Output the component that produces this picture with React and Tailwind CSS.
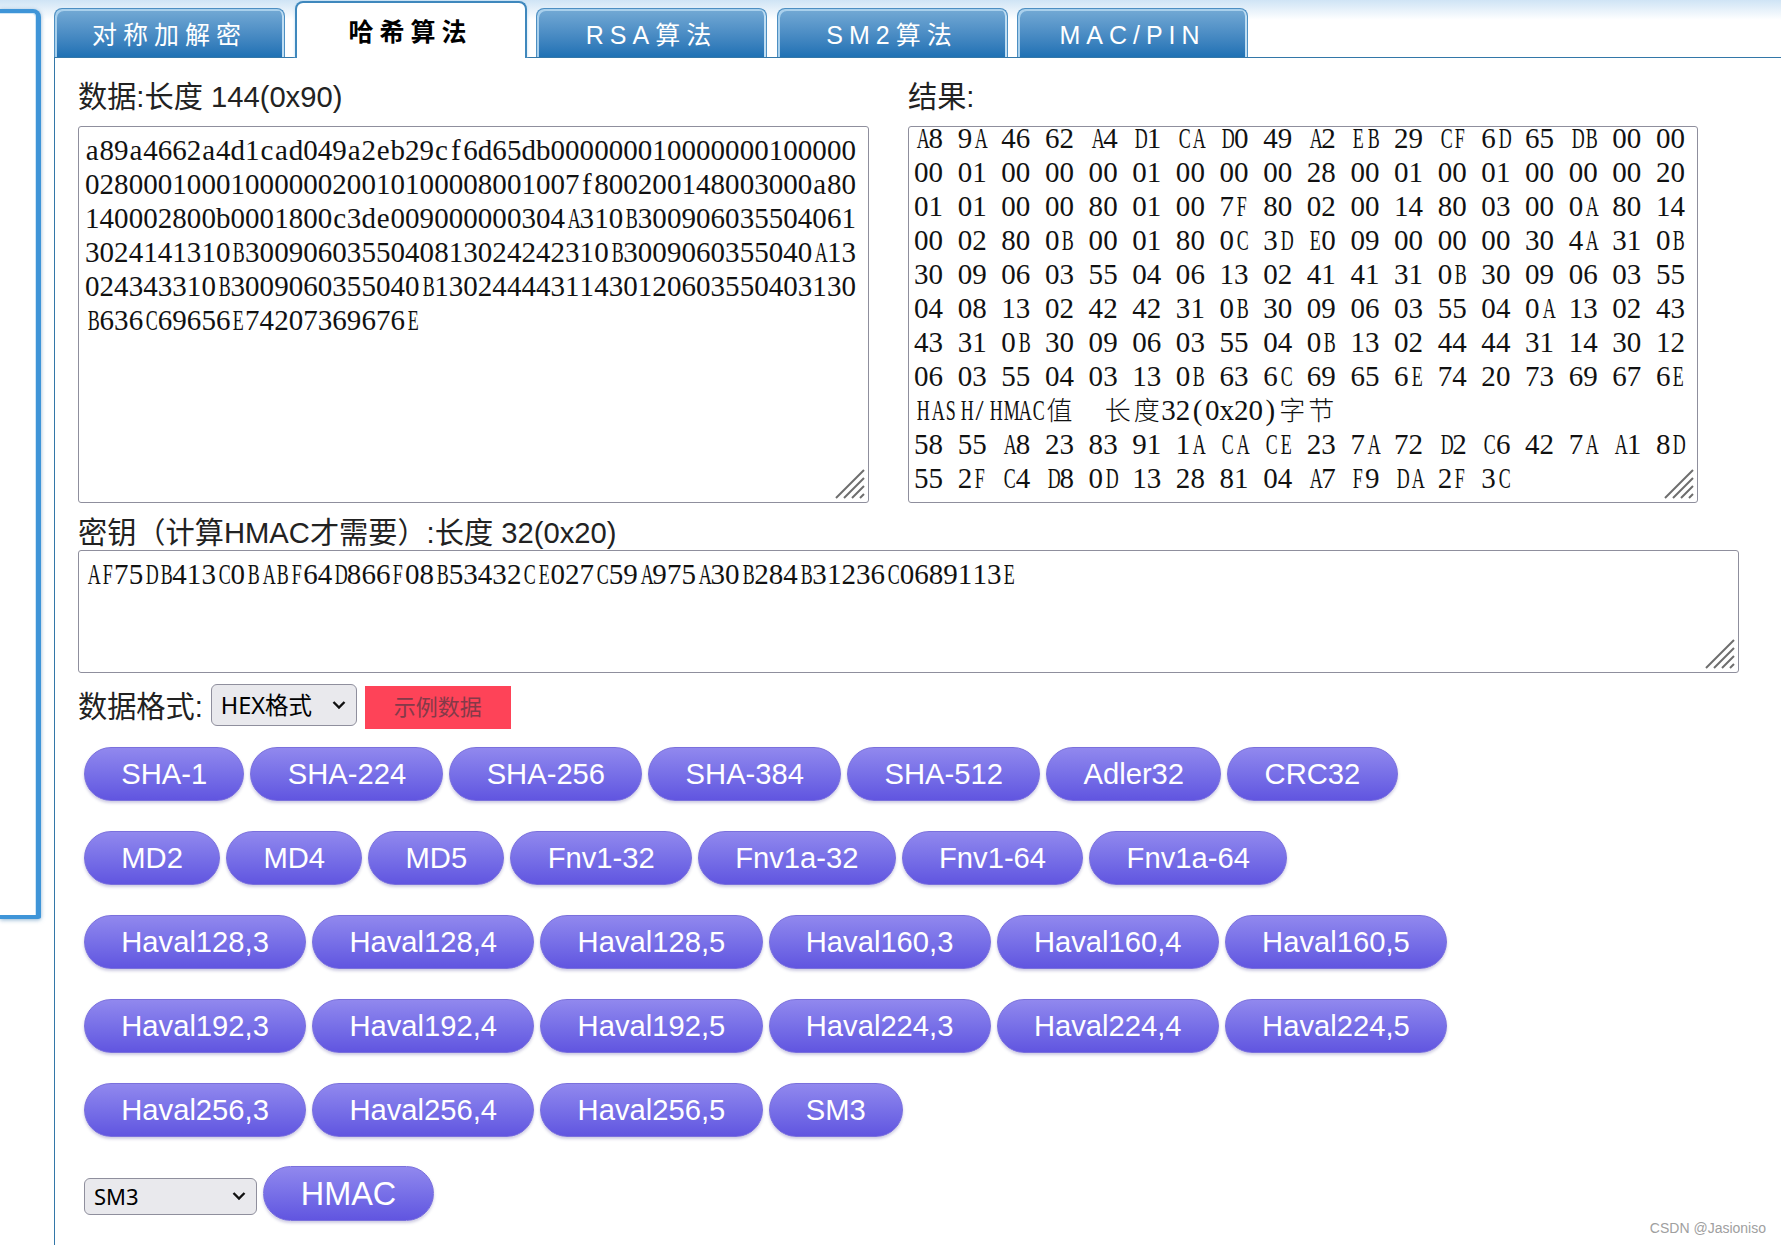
import React from "react";

const sansFont = { fontFamily: '"Liberation Sans", "Noto Sans CJK SC", sans-serif' };

const dataLines = [
  "a89a4662a4d1cad049a2eb29cf6d65db000000010000000100000",
  "0280001000100000020010100008001007f800200148003000a80",
  "140002800b0001800c3de009000000304A310B300906035504061",
  "3024141310B3009060355040813024242310B3009060355040A13",
  "024343310B3009060355040B13024444311430120603550403130",
  "B636C69656E74207369676E",
];

const resultLines = [
  "A8 9A 46 62 A4 D1 CA D0 49 A2 EB 29 CF 6D 65 DB 00 00",
  "00 01 00 00 00 01 00 00 00 28 00 01 00 01 00 00 00 20",
  "01 01 00 00 80 01 00 7F 80 02 00 14 80 03 00 0A 80 14",
  "00 02 80 0B 00 01 80 0C 3D E0 09 00 00 00 30 4A 31 0B",
  "30 09 06 03 55 04 06 13 02 41 41 31 0B 30 09 06 03 55",
  "04 08 13 02 42 42 31 0B 30 09 06 03 55 04 0A 13 02 43",
  "43 31 0B 30 09 06 03 55 04 0B 13 02 44 44 31 14 30 12",
  "06 03 55 04 03 13 0B 63 6C 69 65 6E 74 20 73 69 67 6E",
  "HASH/HMAC值  长度32(0x20)字节",
  "58 55 A8 23 83 91 1A CA CE 23 7A 72 D2 C6 42 7A A1 8D",
  "55 2F C4 D8 0D 13 28 81 04 A7 F9 DA 2F 3C",
];

const keyLine = "AF75DB413C0BABF64D866F08B53432CE027C59A975A30B284B31236C0689113E";

const tabs = ["对称加解密", "哈希算法", "RSA算法", "SM2算法", "MAC/PIN"];

const buttonRows = [
  ["SHA-1", "SHA-224", "SHA-256", "SHA-384", "SHA-512", "Adler32", "CRC32"],
  ["MD2", "MD4", "MD5", "Fnv1-32", "Fnv1a-32", "Fnv1-64", "Fnv1a-64"],
  ["Haval128,3", "Haval128,4", "Haval128,5", "Haval160,3", "Haval160,4", "Haval160,5"],
  ["Haval192,3", "Haval192,4", "Haval192,5", "Haval224,3", "Haval224,4", "Haval224,5"],
  ["Haval256,3", "Haval256,4", "Haval256,5", "SM3"],
];

// fixed cell per character, the box text in the screenshot is a narrow monospace serif
const MonoLine = ({ text }) => (
  <div className="h-[34px] leading-[34px] whitespace-pre">
    {text.split("").map((c, i) => {
      if (c.charCodeAt(0) > 255) {
        return (
          <span key={i} className="inline-block w-[29.1px] text-center text-[26px] font-light">
            {c}
          </span>
        );
      }
      return (
        <span
          key={i}
          className={
            /[A-Z]/.test(c)
              ? "inline-block w-[14.56px] text-center scale-x-[0.62]"
              : "inline-block w-[14.56px] text-center"
          }
        >
          {c}
        </span>
      );
    })}
  </div>
);

const ResizeGrip = () => (
  <svg className="absolute right-[3px] bottom-[3px]" width="30" height="30" viewBox="0 0 30 30">
    <path
      d="M1 29 L29 1 M9 29 L29 9 M17 29 L29 17 M25 29 L29 25"
      stroke="#6e6e6e"
      strokeWidth="2"
      fill="none"
    />
  </svg>
);

const TextBox = ({ lines, className, scrolled }) => (
  <div
    className={`relative overflow-hidden rounded-[3px] border border-[#8f8f9d] bg-white px-[6px] text-[29px] text-[#111] ${className}`}
    style={{ fontFamily: '"Liberation Serif", "Noto Sans CJK SC", serif' }}
  >
    <div className={scrolled ? "-mt-[6px] -ml-px" : "mt-[6px]"}>
      {lines.map((line, i) => (
        <MonoLine key={i} text={line} />
      ))}
    </div>
    <ResizeGrip />
  </div>
);

const Chevron = () => (
  <svg
    className="pointer-events-none absolute right-[11px] top-1/2 -translate-y-1/2"
    width="14"
    height="9"
    viewBox="0 0 14 9"
  >
    <path d="M1.5 1.5 L7 7 L12.5 1.5" stroke="#111" strokeWidth="2.4" fill="none" />
  </svg>
);

const HashButton = ({ label, big }) => (
  <button
    className={
      big
        ? "h-[55px] w-[171px] shrink-0 rounded-[28px] border border-[#7a70dc] bg-gradient-to-b from-[#9188ee] to-[#6155e0] pt-[3px] text-[32.4px] text-white shadow-[0_2px_3px_rgba(60,50,140,0.25)]"
        : "h-[54px] shrink-0 rounded-[27px] border border-[#7a70dc] bg-gradient-to-b from-[#9188ee] to-[#6155e0] px-[36.25px] pt-[3px] text-[29.2px] text-white shadow-[0_2px_3px_rgba(60,50,140,0.25)]"
    }
  >
    {label}
  </button>
);

const Tab = ({ label, active }) =>
  active ? (
    <div className="-mb-px flex h-[57px] w-[232px] items-start justify-center rounded-t-[8px] border-x-2 border-t-2 border-[#3f88bd] bg-white pt-[14px] text-[25px] leading-[30px] font-bold tracking-[6px] text-black shadow-[0_0_3px_#bcdcf2]">
      {label}
    </div>
  ) : (
    <div className="flex h-[49px] w-[231px] items-center justify-center rounded-t-[8px] border-x border-t border-[#4d8fc2] bg-gradient-to-b from-[#74aad5] to-[#1e71b4] pt-[5px] text-[25px] tracking-[6px] text-white shadow-[inset_2px_2px_0_#a9d0ec,inset_-2px_0_0_#c0def3]">
      {label}
    </div>
  );

export default function App() {
  return (
    <div
      className="relative flex h-[1245px] overflow-hidden bg-[linear-gradient(#cfe4f5,#ffffff_20px)] text-[#222]"
      style={sansFont}
    >
      {/* left panel, only its edge is in the shot */}
      <div className="mt-[9px] h-[910px] w-[41px] shrink-0 rounded-tr-[8px] rounded-br-[3px] border-y-[4px] border-r-[5px] border-[#3f95d8] bg-white shadow-[0_1px_4px_rgba(70,130,180,0.6),inset_-1px_1px_0_#cfe6f7]" />

      <div className="ml-[13px] flex min-w-0 flex-1 flex-col">
        <div className="flex h-[58px] shrink-0 items-end gap-[9.5px] border-b border-[#3377a8]">
          {tabs.map((t, i) => (
            <Tab key={t} label={t} active={i === 1} />
          ))}
        </div>

        <div className="flex-1 border-l border-[#3377a8] bg-white pt-[22px] pl-[23px]">
          <div className="flex gap-[39px]">
            <div className="w-[791px]">
              <div className="mb-[12px] text-[29.2px] leading-[34px]">数据:长度 144(0x90)</div>
              <TextBox lines={dataLines} className="h-[377px]" />
            </div>
            <div className="w-[790px]">
              <div className="mb-[12px] text-[29.2px] leading-[34px]">结果:</div>
              <TextBox lines={resultLines} className="h-[377px]" scrolled />
            </div>
          </div>

          <div className="mt-[13px] text-[29.2px] leading-[34px]">密钥（计算HMAC才需要）:长度 32(0x20)</div>
          <TextBox lines={[keyLine]} className="h-[123px] w-[1661px]" />

          <div className="mt-[11px] flex items-start gap-[8px]">
            <span className="mt-[6px] text-[29.2px] leading-[34px]">数据格式:</span>
            <div className="relative">
              <select
                className="h-[42px] w-[146px] appearance-none rounded-[6px] border border-[#8f8f9d] bg-[#e9e9ed] pt-[2px] pl-[9px] text-[23.5px] text-black"
                style={{ fontFamily: '"Noto Sans", "Noto Sans CJK SC", sans-serif' }}
              >
                <option>HEX格式</option>
              </select>
              <Chevron />
            </div>
            <button className="mt-[2px] h-[43px] w-[146px] bg-[#fe4358] text-[22px] text-[#843a49]">示例数据</button>
          </div>

          <div className="mt-[17.5px] ml-[6px] flex flex-col gap-[30px]">
            {buttonRows.map((row, i) => (
              <div key={i} className="flex gap-[6px]">
                {row.map((b) => (
                  <HashButton key={b} label={b} />
                ))}
              </div>
            ))}
            <div className="-mt-px flex items-start gap-[6px]">
              <div className="relative mt-[12px]">
                <select
                  className="h-[37px] w-[173px] appearance-none rounded-[6px] border border-[#8f8f9d] bg-[#e9e9ed] pl-[9px] text-[22px] text-black"
                  style={{ fontFamily: '"Noto Sans", "Noto Sans CJK SC", sans-serif' }}
                >
                  <option>SM3</option>
                </select>
                <Chevron />
              </div>
              <HashButton label="HMAC" big />
            </div>
          </div>
        </div>
      </div>

      <div className="absolute right-[15px] bottom-[6px] text-[14px] text-[#a0a0a0]">CSDN @Jasioniso</div>
    </div>
  );
}
